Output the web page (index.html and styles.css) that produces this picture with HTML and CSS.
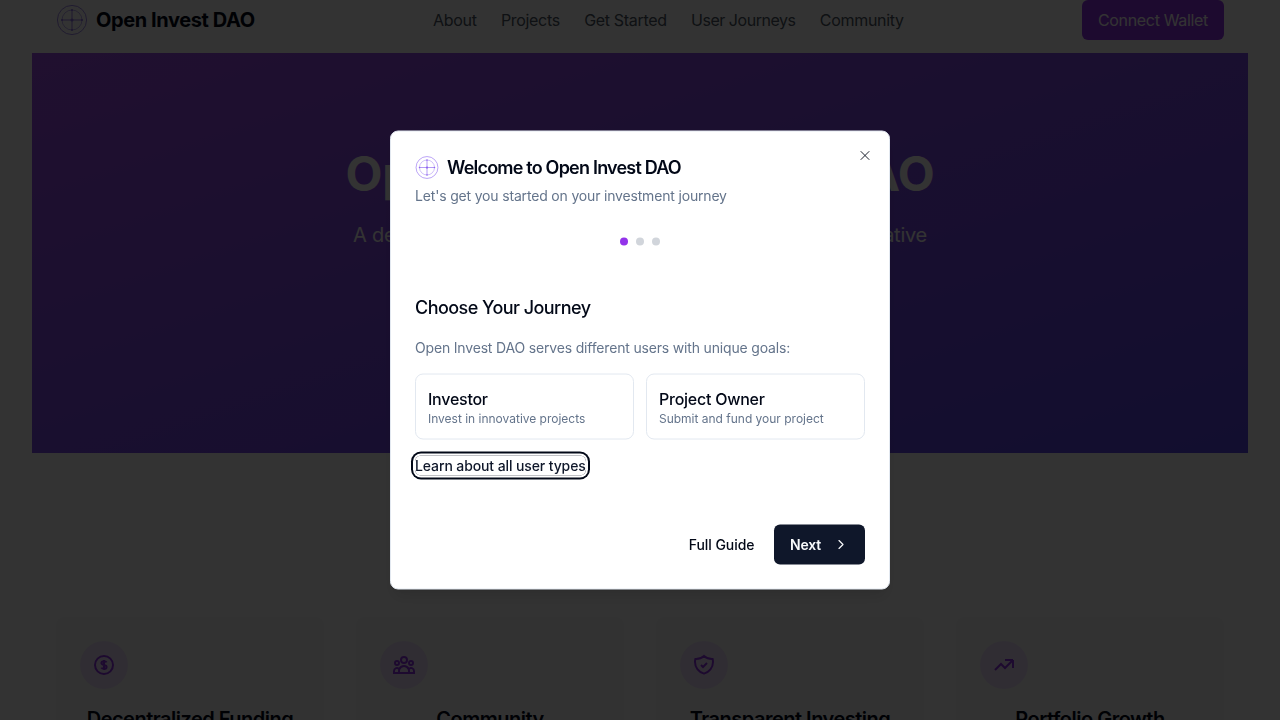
FILE: index.html
```html
<!DOCTYPE html>
<html lang="en">
<head>
<meta charset="utf-8">
<title>Open Invest DAO</title>
<link rel="stylesheet" href="styles.css">
</head>
<body>
<svg width="0" height="0" class="defs">
  <symbol id="logo" viewBox="0 0 32 32">
    <g fill="none" stroke="currentColor">
      <circle cx="16" cy="16" r="14.6" stroke-width=".8"/>
      <circle cx="16" cy="16" r="10" stroke-width=".8" opacity=".7"/>
      <path d="M16 6v20M6 16h20" stroke-width=".9"/>
    </g>
    <g fill="currentColor"><circle cx="16" cy="16" r="1.5"/><circle cx="16" cy="6" r="1"/><circle cx="16" cy="26" r="1"/><circle cx="6" cy="16" r="1"/><circle cx="26" cy="16" r="1"/></g>
  </symbol>
</svg>
<div class="page">
  <header class="header">
    <div class="brand"><svg class="brand-logo"><use href="#logo"/></svg><span>Open Invest DAO</span></div>
    <nav class="nav"><a>About</a><a>Projects</a><a>Get Started</a><a class="tight">User Journeys</a><a>Community</a></nav>
    <button class="wallet">Connect Wallet</button>
  </header>
  <section class="hero">
    <h1>Open Investment for DAO</h1>
    <p>A decentralized platform for community investing in innovative<br>projects</p>
  </section>
  <section class="features">
    <article class="feature">
      <div class="feature-icon"><svg viewBox="0 0 24 24"><circle cx="12" cy="12" r="9"/><path d="M14.6 9.4c-.4-.8-1.300-1.200-2.600-1.200-1.500 0-2.600.7-2.600 1.900s1.100 1.600 2.600 1.900 2.600.7 2.600 1.900-1.100 1.900-2.600 1.900c-1.300 0-2.200-.4-2.600-1.200M12 7v10"/></svg></div>
      <h3>Decentralized Funding</h3>
    </article>
    <article class="feature">
      <div class="feature-icon"><svg viewBox="0 0 24 24"><path d="M17 20h5v-2a3 3 0 00-5.356-1.857M17 20H7m10 0v-2c0-.656-.126-1.283-.356-1.857M7 20H2v-2a3 3 0 015.356-1.857M7 20v-2c0-.656.126-1.283.356-1.857m0 0a5.002 5.002 0 019.288 0M15 7a3 3 0 11-6 0 3 3 0 016 0zm6 3a2 2 0 11-4 0 2 2 0 014 0zM7 10a2 2 0 11-4 0 2 2 0 014 0z"/></svg></div>
      <h3>Community</h3>
    </article>
    <article class="feature">
      <div class="feature-icon"><svg viewBox="0 0 24 24"><path d="M9 12l2 2 4-4m5.618-4.016A11.955 11.955 0 0112 2.944a11.955 11.955 0 01-8.618 3.040A12.020 12.020 0 003 9c0 5.591 3.824 10.290 9 11.622 5.176-1.332 9-6.030 9-11.622 0-1.042-.133-2.052-.382-3.016z"/></svg></div>
      <h3>Transparent Investing</h3>
    </article>
    <article class="feature">
      <div class="feature-icon"><svg viewBox="0 0 24 24"><path d="M13 7h8m0 0v8m0-8l-8 8-4-4-6 6"/></svg></div>
      <h3>Portfolio Growth</h3>
    </article>
  </section>
</div>
<div class="overlay"></div>
<div class="dialog" role="dialog">
  <div class="dialog-title"><svg class="dialog-logo"><use href="#logo"/></svg><h2>Welcome to Open Invest DAO</h2></div>
  <p class="muted subtitle">Let's get you started on your investment journey</p>
  <div class="dots"><i class="dot active"></i><i class="dot"></i><i class="dot"></i></div>
  <div class="step">
    <h3>Choose Your Journey</h3>
    <p class="muted">Open Invest DAO serves different users with unique goals:</p>
    <div class="choices">
      <div class="choice"><strong>Investor</strong><span>Invest in innovative projects</span></div>
      <div class="choice"><strong>Project Owner</strong><span>Submit and fund your project</span></div>
    </div>
    <button class="learn">Learn about all user types</button>
  </div>
  <div class="actions">
    <button class="guide">Full Guide</button>
    <button class="next"><span>Next</span><svg viewBox="0 0 24 24"><path d="m9 18 6-6-6-6"/></svg></button>
  </div>
  <svg class="close" viewBox="0 0 24 24"><path d="M18 6 6 18M6 6l12 12"/></svg>
</div>
</body>
</html>
```
FILE: styles.css
```css
* { box-sizing: border-box; margin: 0; padding: 0; }
body { font-family: Inter, sans-serif; color: #020817; background: #fff; overflow: hidden; height: 720px; }
button { font: inherit; border: 0; background: none; color: inherit; }
svg { display: block; flex: none; }
.defs { position: absolute; }
.page { height: 720px; overflow: hidden; padding: 0 32px; }

.header { display: flex; align-items: center; justify-content: space-between; height: 40px; margin: 0 24px 13px; }
.brand { display: flex; align-items: center; gap: 8px; font-size: 20px; font-weight: 700; letter-spacing: -.4px; }
.brand-logo { width: 32px; height: 32px; color: #6d4ae0; opacity: .8; }
.nav { display: flex; gap: 24.3px; font-size: 16px; letter-spacing: -.32px; color: #4b5563; }
.nav .tight { letter-spacing: -.46px; }
.wallet { height: 40px; padding: 0 16px; border-radius: 6px; background: #9333ea; color: #fff; font-size: 16px; letter-spacing: -.33px; }

.hero { height: 400px; padding-top: 91px; background: linear-gradient(to bottom right, #a04fec, #5b45e8); color: #fff; text-align: center; white-space: nowrap; }
.hero h1 { font-size: 48px; line-height: 60px; font-weight: 700; letter-spacing: -.2px; }
.hero p { margin-top: 17px; font-size: 20px; line-height: 28px; letter-spacing: -.25px; }

.features { display: grid; grid-template-columns: repeat(4, 1fr); gap: 32px; margin: 164px 24px 0; }
.feature { height: 240px; padding: 24px; border-radius: 8px; background: #f9fafb; }
.feature-icon { display: flex; align-items: center; justify-content: center; width: 48px; height: 48px; margin-bottom: 16px; border-radius: 50%; background: #f0e2fc; }
.feature-icon svg { width: 24px; height: 24px; fill: none; stroke: #9333ea; stroke-width: 2; }
.feature h3 { font-size: 20px; line-height: 28px; font-weight: 600; letter-spacing: -.5px; text-align: center; white-space: nowrap; }

.overlay { position: fixed; inset: 0; background: rgba(0, 0, 0, .8); }
.dialog { position: fixed; left: 50%; top: 50%; transform: translate(-50%, -50%); width: 500px; height: 459px; padding: 24px; border: 1px solid #e2e8f0; border-radius: 8px; background: #fff; box-shadow: 0 10px 15px -3px rgba(0, 0, 0, .1), 0 4px 6px -4px rgba(0, 0, 0, .1); }
.dialog-title { display: flex; align-items: center; gap: 8px; height: 24px; }
.dialog-logo { width: 24px; height: 24px; color: #8257ee; opacity: .9; }
.dialog-title h2 { font-size: 18px; line-height: 18px; font-weight: 600; letter-spacing: -.79px; }
.muted { font-size: 14px; line-height: 20px; letter-spacing: -.175px; color: #64748b; }
.subtitle { margin-top: 6px; }
.dots { display: flex; justify-content: center; gap: 8px; padding: 16px 0; margin-top: 16px; }
.dot { width: 8px; height: 8px; border-radius: 50%; background: #d1d5db; }
.dot.active { background: #9333ea; }
.step { display: flex; flex-direction: column; align-items: flex-start; gap: 16px; margin-top: 32px; }
.step h3 { font-size: 18px; line-height: 28px; font-weight: 500; letter-spacing: -.55px; }
.choices { display: grid; grid-template-columns: 1fr 1fr; gap: 12px; width: 100%; }
.choice { display: flex; flex-direction: column; padding: 12px; border: 1px solid #e2e8f0; border-radius: 8px; }
.choice strong { font-size: 16px; line-height: 24px; font-weight: 500; letter-spacing: -.25px; }
.choice span { font-size: 12px; line-height: 16px; letter-spacing: -.01px; color: #64748b; }
.learn { height: 20px; border-radius: 6px; color: #0f172a; font-size: 14px; line-height: 20px; font-weight: 500; letter-spacing: -.11px; box-shadow: 0 0 0 2px #fff, 0 0 0 4px #020817; }
.actions { display: flex; justify-content: flex-end; gap: 8px; margin-top: 49px; font-size: 14px; line-height: 20px; font-weight: 500; }
.guide { height: 40px; padding: 0 11.5px; letter-spacing: -.05px; }
.next { display: flex; align-items: center; justify-content: space-between; width: 91px; height: 40px; padding: 0 16px; border-radius: 6px; background: #0f172a; color: #f8fafc; }
.next span { font-weight: 600; letter-spacing: -.2px; }
.next svg, .close { width: 16px; height: 16px; fill: none; stroke: currentColor; stroke-width: 1.5; stroke-linecap: round; stroke-linejoin: round; }
.next svg { stroke-width: 1.75; }
.close { position: absolute; right: 16px; top: 16px; opacity: .9; }
```
